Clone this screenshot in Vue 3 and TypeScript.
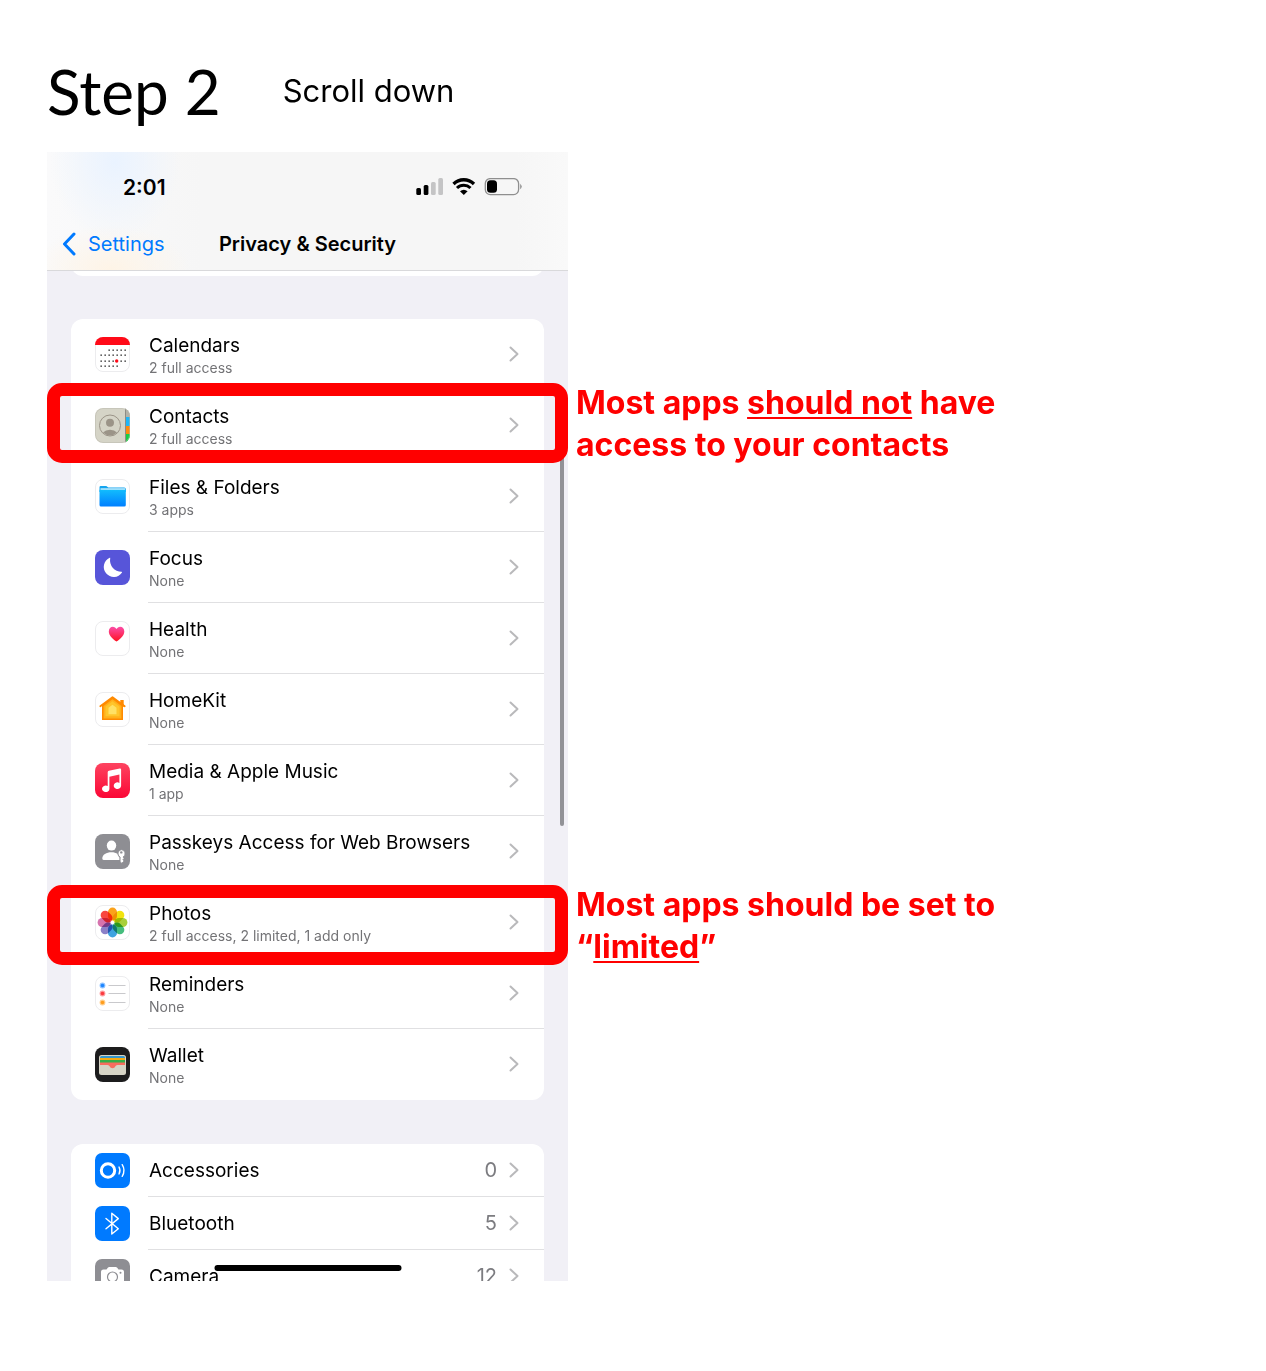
<script setup lang="ts">
interface Item {
  id: string
  title: string
  detail?: string
  count?: number
  mark?: 'high' | 'low'
}

const privacyItems: Item[] = [
  { id: 'calendars', title: 'Calendars', detail: '2 full access' },
  { id: 'contacts', title: 'Contacts', detail: '2 full access', mark: 'high' },
  { id: 'files', title: 'Files & Folders', detail: '3 apps' },
  { id: 'focus', title: 'Focus', detail: 'None' },
  { id: 'health', title: 'Health', detail: 'None' },
  { id: 'homekit', title: 'HomeKit', detail: 'None' },
  { id: 'music', title: 'Media & Apple Music', detail: '1 app' },
  { id: 'passkeys', title: 'Passkeys Access for Web Browsers', detail: 'None' },
  { id: 'photos', title: 'Photos', detail: '2 full access, 2 limited, 1 add only', mark: 'low' },
  { id: 'reminders', title: 'Reminders', detail: 'None' },
  { id: 'wallet', title: 'Wallet', detail: 'None' },
]

const hardwareItems: Item[] = [
  { id: 'accessories', title: 'Accessories', count: 0 },
  { id: 'bluetooth', title: 'Bluetooth', count: 5 },
  { id: 'camera', title: 'Camera', count: 12 },
]

const groups = [
  { name: 'privacy', items: privacyItems },
  { name: 'hardware', items: hardwareItems },
]

const whiteTiles = ['calendars', 'files', 'health', 'homekit', 'photos', 'reminders']

const petals = ['#fba21b', '#f2e30d', '#a8cf3a', '#45bd7d', '#3fa3e0', '#8b80c8', '#d673ae', '#f8463f']

// Calendar dots: y position with first and last column
const dotRows: [number, number, number][] = [
  [13, 2, 6],
  [18, 0, 6],
  [24, 0, 6],
  [29, 0, 4],
]
const dots = dotRows.flatMap(([y, from, to]) =>
  Array.from({ length: to - from + 1 }, (_, i) => ({ x: 6 + (from + i) * 4, y })),
)

const reminders = [
  { y: 9.5, color: '#1e86ff' },
  { y: 17.5, color: '#fb3b3f' },
  { y: 26.5, color: '#ff9d1c' },
]
</script>

<template>
  <main class="page">
    <header class="heading">
      <h1>Step 2</h1>
      <p>Scroll down</p>
    </header>

    <div class="content">
      <section class="phone" aria-label="Privacy and security settings">
        <svg class="paints" width="0" height="0" aria-hidden="true">
          <defs>
            <linearGradient id="red" x1="0" y1="0" x2="0" y2="1">
              <stop offset="0" stop-color="#fd4460" /><stop offset="1" stop-color="#fb0736" />
            </linearGradient>
            <linearGradient id="blue" x1="0" y1="0" x2="0" y2="1">
              <stop offset="0" stop-color="#12bdfd" /><stop offset="1" stop-color="#007fff" />
            </linearGradient>
            <linearGradient id="heart" x1="0" y1="0" x2="0" y2="1">
              <stop offset="0" stop-color="#fb4da8" /><stop offset="1" stop-color="#fe1020" />
            </linearGradient>
            <clipPath id="tile"><rect width="35" height="35" rx="8" /></clipPath>
          </defs>
        </svg>

        <div class="topbar">
          <div class="status">
            <span class="time">2:01</span>
            <svg width="107" height="18" viewBox="0 0 107 18" aria-hidden="true">
              <rect x="0.3" y="10" width="4.700" height="7" rx="1.500" />
              <rect x="7.700" y="7" width="4.700" height="10" rx="1.500" />
              <rect x="15" y="4" width="4.700" height="13" rx="1.500" fill="#c4c4c5" />
              <rect x="22.300" y="0" width="4.700" height="17" rx="1.500" fill="#c4c4c5" />
              <path d="M37.500 6a14.500 14.500 0 0 1 20.500 0" fill="none" stroke="#000" stroke-width="3.300" />
              <path d="M41 10a9.800 9.800 0 0 1 13.500 0" fill="none" stroke="#000" stroke-width="3.100" />
              <path d="M44 13.200q3.800-3 7.600 0l-3.800 3.900z" />
              <rect x="69.300" y="0.600" width="33.300" height="16" rx="5" fill="none" stroke="#8f8f8f" stroke-width="1.300" />
              <rect x="71" y="2.300" width="10" height="12.500" rx="3.500" />
              <path d="M104.200 5.700q3 2.800 0 5.600z" fill="#8f8f8f" />
            </svg>
          </div>
          <nav class="nav">
            <a href="#settings" class="back">
              <svg width="14" height="24" viewBox="0 0 14 24" aria-hidden="true">
                <path d="M12 2 2.500 12l9.500 10" fill="none" stroke="#007aff" stroke-width="3" stroke-linecap="round" stroke-linejoin="round" />
              </svg>
              <span>Settings</span>
            </a>
            <h2>Privacy &amp; Security</h2>
          </nav>
        </div>

        <div class="stub"></div>

        <ul v-for="group in groups" :key="group.name" class="card" :class="group.name">
          <li v-for="item in group.items" :key="item.id" class="item">
            <a :href="'#' + item.id" class="row">
              <svg class="icon" width="35" height="35" viewBox="0 0 35 35" aria-hidden="true">
                <rect
                  v-if="whiteTiles.includes(item.id)"
                  x="0.5" y="0.5" width="34" height="34" rx="7.5" fill="#fff" stroke="#ececee"
                />

                <g v-if="item.id === 'calendars'">
                  <rect width="35" height="8" fill="#ff0a18" clip-path="url(#tile)" />
                  <rect v-for="(dot, i) in dots" :key="i" :x="dot.x - 0.5" :y="dot.y - 0.5" width="1.300" height="1.300" fill="#111" />
                  <circle cx="21.700" cy="24" r="1.700" fill="#ff0a18" />
                </g>

                <g v-else-if="item.id === 'contacts'" clip-path="url(#tile)">
                  <rect width="35" height="35" fill="#d5d4c7" />
                  <rect x="30" width="5" height="9" fill="#b4b2a7" />
                  <rect x="31" y="9" width="4" height="9" fill="#1fb6f7" />
                  <rect x="31" y="18" width="4" height="8" fill="#ff8a0d" />
                  <rect x="31" y="26" width="4" height="9" fill="#15cf45" />
                  <path d="M30.500 0v35" stroke="#8e8c84" />
                  <circle cx="15" cy="17.500" r="10.500" fill="none" stroke="#9b9488" />
                  <circle cx="15" cy="14.800" r="4" fill="#9b9488" />
                  <path d="M8 24.500q2.500-2.700 7-2.700t7 2.700q-3 2.900-7 2.900t-7-2.900z" fill="#9b9488" />
                  <rect x="0.5" y="0.5" width="34" height="34" rx="7.5" fill="none" stroke="#b9b8ad" stroke-opacity="0.5" />
                </g>

                <g v-else-if="item.id === 'files'">
                  <path d="M4.500 9V8.200Q4.500 7 5.700 7h5.600l2 1.500h16q1.500 0 1.500 1.500v3h-26.300z" fill="#14a5ef" />
                  <rect x="5.500" y="9.300" width="24.500" height="3" fill="#c9edfc" />
                  <path d="M4.500 10.700h26.300v15.300q0 1.500-1.500 1.500H6q-1.500 0-1.500-1.500z" fill="url(#blue)" />
                </g>

                <g v-else-if="item.id === 'focus'">
                  <rect width="35" height="35" rx="8" fill="#5755d9" />
                  <path d="M14.700 7.800q.8-.4.500.5a11.500 11.500 0 0 0 11.300 13.500q.8 0 .5.800a10 10 0 1 1-12.300-14.800z" fill="#fff" />
                </g>

                <path
                  v-else-if="item.id === 'health'"
                  d="M21.500 20.600C17 17.500 13.800 14.200 13.800 10.500c0-2.900 1.900-4.700 4-4.700 1.700 0 3 1 3.700 2.300.7-1.300 2-2.300 3.700-2.300 2.200 0 4.100 1.800 4.100 4.700 0 3.700-3.300 7-7.800 10.100z"
                  fill="url(#heart)"
                />

                <g v-else-if="item.id === 'homekit'">
                  <path d="M25.300 8h3.400v7h-3.400z" fill="#ff8a00" />
                  <path d="M7.800 13.500v13.800h19.400V13.500L17.500 6z" fill="#ffb01c" stroke="#ff8a00" stroke-width="1.600" />
                  <path d="M5.300 14.300 17.500 5.200l12.200 9.100" fill="none" stroke="#ff8a00" stroke-width="1.800" stroke-linecap="round" stroke-linejoin="round" />
                  <path d="M10.500 14.500v9.800h14v-9.800l-7-5.200z" fill="#ffc52b" />
                  <path d="M13.500 15.800v6.500h8v-6.500l-4-3z" fill="#ffe165" />
                </g>

                <g v-else-if="item.id === 'music'">
                  <rect width="35" height="35" rx="8" fill="url(#red)" />
                  <path d="M12.700 9.200q0-1.200 1.200-1.500l10.900-2.200q1.300-.2 1.300 1.100v16.200a3.700 3.300 0 1 1-1.700-2.900v-8.300l-10 2.100v12.200a3.700 3.300 0 1 1-1.700-2.900z" fill="#fff" />
                </g>

                <g v-else-if="item.id === 'passkeys'">
                  <rect width="35" height="35" rx="8" fill="#8e8e93" />
                  <ellipse cx="16.500" cy="11.600" rx="4.700" ry="5" fill="#fff" />
                  <path d="M7.300 24.500c0-4 4-6.300 9.200-6.300 2.600 0 4.500.5 6 1.600.3 1.800 1 3 2.100 3.800v2.400H9q-1.700 0-1.700-1.500z" fill="#fff" />
                  <path d="M26.300 15.700a3.900 3.900 0 0 1 1.700 7.300l1.100 1.300-1.200 1.400 1.200 1.300-2.300 2.200-1.700-1.500V23a3.900 3.900 0 0 1 1.200-7.300z" fill="#fff" stroke="#8e8e93" stroke-width="0.8" />
                  <circle cx="26.300" cy="18.400" r="1.200" fill="#8e8e93" />
                </g>

                <g v-else-if="item.id === 'photos'" class="petals">
                  <rect
                    v-for="(color, i) in petals" :key="color"
                    x="13" y="2.600" width="9" height="13" rx="4.500"
                    :fill="color" :transform="`rotate(${i * 45} 17.5 17.5)`"
                  />
                </g>

                <g v-else-if="item.id === 'reminders'">
                  <template v-for="line in reminders" :key="line.y">
                    <circle cx="7.500" :cy="line.y" r="2.900" :fill="line.color" fill-opacity="0.5" />
                    <circle cx="7.500" :cy="line.y" r="1.800" :fill="line.color" />
                    <path :d="`M13.5 ${line.y}h17`" stroke="#c9c9cc" />
                  </template>
                </g>

                <g v-else-if="item.id === 'wallet'">
                  <rect width="35" height="35" rx="8" fill="#1c1c1d" />
                  <rect x="4" y="8" width="27" height="20" rx="2.500" fill="#d6d4c6" />
                  <path d="M5 12v-1.500Q5 9 6.500 9h22q1.500 0 1.500 1.500V12z" fill="#3597cb" />
                  <path d="M5 11h25v3H5z" fill="#f5ab12" />
                  <path d="M5 13h25v3H5z" fill="#35ad48" />
                  <path d="M5 15.500h25V18h-7.500q-1 0-1.700.8-1.300 2.500-3.300 2.500t-3.300-2.500q-.7-.8-1.700-.8H5z" fill="#f96c5e" />
                </g>

                <g v-else-if="item.id === 'accessories'">
                  <rect width="35" height="35" rx="7" fill="#007aff" />
                  <circle cx="13" cy="17.500" r="6.700" fill="none" stroke="#fff" stroke-width="3" />
                  <path d="M24 14q2 3.500 0 7M27.200 11.700q3.600 5.800 0 11.600" fill="none" stroke="#fff" stroke-width="1.400" stroke-linecap="round" />
                </g>

                <g v-else-if="item.id === 'bluetooth'">
                  <rect width="35" height="35" rx="7" fill="#007aff" />
                  <path d="m11 12.500 12.300 10.200-6.500 5.300V7.300l6.500 5.300L11 22.800" fill="none" stroke="#fff" stroke-width="1.400" stroke-linecap="round" stroke-linejoin="round" />
                </g>

                <g v-else-if="item.id === 'camera'">
                  <rect width="35" height="35" rx="7" fill="#8e8e93" />
                  <path d="M6 13q0-2.500 2.500-2.500h3l1.300-1.700q.6-.8 1.600-.8h6.200q1 0 1.600.8l1.300 1.700h3q2.500 0 2.500 2.500v11q0 2.500-2.500 2.500h-18Q6 26.500 6 24z" fill="#fff" />
                  <circle cx="17.500" cy="18" r="5" fill="none" stroke="#8e8e93" stroke-width="1.200" />
                  <circle cx="25.500" cy="13.800" r="1" fill="#8e8e93" />
                </g>
              </svg>

              <span class="body">
                <span class="labels">
                  <span class="title">{{ item.title }}</span>
                  <span v-if="item.detail" class="detail">{{ item.detail }}</span>
                </span>
                <span v-if="item.count !== undefined" class="count">{{ item.count }}</span>
                <svg class="chevron" width="10" height="16" viewBox="0 0 10 16" aria-hidden="true">
                  <path d="m1.500 1.500 7 6.500-7 6.500" fill="none" stroke="#b9b9bb" stroke-width="2" stroke-linecap="round" stroke-linejoin="round" />
                </svg>
              </span>
            </a>
            <span v-if="item.mark" class="mark" :class="item.mark"></span>
          </li>
        </ul>

        <span class="scrollbar"></span>
        <span class="home-bar"></span>
      </section>

      <aside class="notes">
        <p>Most apps <u>should not</u> have access to your contacts</p>
        <p>Most apps should be set to “<u>limited</u>”</p>
      </aside>
    </div>
  </main>
</template>

<style>
body {
  margin: 0;
  background: #fff;
}
</style>

<style scoped>
.page {
  padding: 0 47px 90px;
  font-family: Inter, "Liberation Sans", sans-serif;
  color: #000;
}

.heading {
  display: flex;
  align-items: center;
  gap: 62px;
  height: 152px;
  padding-top: 30px;
  box-sizing: border-box;
}

h1,
h2,
p,
ul {
  margin: 0;
  padding: 0;
}

h1 {
  font-family: Lato, Inter, sans-serif;
  font-size: 62px;
  line-height: 72px;
  font-weight: 400;
}

.heading p {
  font-size: 31px;
  line-height: 40px;
}

.content {
  display: grid;
  grid-template-columns: minmax(0, 521px) minmax(0, 450px);
  column-gap: 8px;
  align-items: start;
}

.phone {
  position: relative;
  overflow: hidden;
  background: #f1f0f6;
}

.paints {
  position: absolute;
}

.topbar {
  position: relative;
  z-index: 1;
  background:
    radial-gradient(ellipse 65px 80px at 68px 10px, #eaf3ff, transparent),
    radial-gradient(ellipse 80px 45px at 64px 118px, #fef4e6, transparent),
    linear-gradient(90deg, #fafafb, #f6f6f6 30%, #f6f6f6 90%, #f9f9f9);
  border-bottom: 1px solid #d9d9db;
}

.status {
  display: flex;
  justify-content: space-between;
  align-items: center;
  height: 70px;
  padding: 0 45px 0 76px;
}

.time {
  font-size: 21px;
  font-weight: 600;
}

.nav {
  display: grid;
  grid-template-columns: 1fr auto 1fr;
  align-items: center;
  height: 48px;
  padding: 0 15px 4px;
  box-sizing: border-box;
}

.back {
  display: flex;
  align-items: center;
  gap: 12px;
  font-size: 20px;
  color: #007aff;
  text-decoration: none;
}

h2 {
  font-size: 20px;
  font-weight: 600;
}

.stub {
  height: 25px;
  margin: -20px 24px 43px;
  background: #fff;
  border-radius: 12px;
}

.card {
  list-style: none;
  margin: 0 24px;
  background: #fff;
  border-radius: 12px;
}

.hardware {
  max-height: 137px;
  margin-top: 44px;
  overflow: hidden;
  border-radius: 12px 12px 0 0;
}

.item {
  position: relative;
}

.row {
  display: flex;
  align-items: center;
  gap: 18px;
  padding-left: 24px;
  color: inherit;
  text-decoration: none;
}

.icon,
.chevron {
  display: block;
  flex: none;
}

.body {
  flex: 1;
  display: flex;
  align-items: center;
  gap: 12px;
  height: 71px;
  padding: 0 25px 0 1px;
  box-sizing: border-box;
  border-bottom: 1px solid #e0e0e2;
}

.hardware .body {
  height: 53px;
}

.item:last-child .body {
  border-bottom-color: transparent;
}

.labels {
  flex: 1;
  display: flex;
  flex-direction: column;
  padding-top: 2px;
  white-space: nowrap;
}

.title {
  font-size: 19px;
  line-height: 26px;
}

.detail {
  font-size: 14px;
  line-height: 18px;
  color: #737376;
}

.count {
  font-size: 20px;
  color: #7c7c80;
}

.petals rect {
  mix-blend-mode: multiply;
}

.mark {
  position: absolute;
  z-index: 2;
  border: 13px solid #f00;
  border-radius: 15px;
  pointer-events: none;
}

.high {
  inset: -7px -24px -2px;
}

.low {
  inset: -2px -24px -7px;
}

.scrollbar {
  position: absolute;
  z-index: 1;
  top: 260px;
  right: 4px;
  width: 4px;
  height: 414px;
  border-radius: 2px;
  background: #929297;
}

.home-bar {
  position: absolute;
  bottom: 10px;
  left: 50%;
  width: 187px;
  height: 6px;
  border-radius: 3px;
  background: #000;
  transform: translateX(-50%);
}

.notes {
  display: flex;
  flex-direction: column;
  gap: 418px;
  padding-top: 230px;
  font-size: 32px;
  line-height: 42px;
  font-weight: 700;
  color: #f00;
}

u {
  text-decoration-thickness: 2px;
  text-underline-offset: 3px;
  text-decoration-skip-ink: none;
}
</style>
